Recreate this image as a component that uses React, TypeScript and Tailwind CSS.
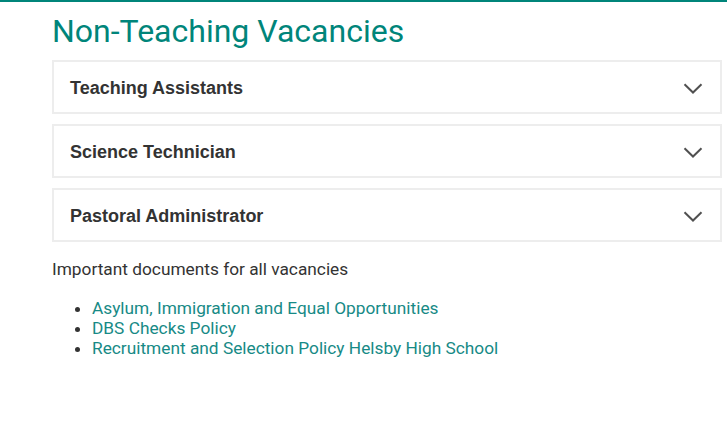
import { useState } from "react";

const vacancies = ["Teaching Assistants", "Science Technician", "Pastoral Administrator"];

const documents = [
  "Asylum, Immigration and Equal Opportunities",
  "DBS Checks Policy",
  "Recruitment and Selection Policy Helsby High School",
];

function Chevron() {
  return (
    <svg width="20" height="11" viewBox="0 0 20 11" fill="none">
      <path d="M1.5 1.2l8.5 8.3 8.5-8.3" stroke="#505050" strokeWidth="2" />
    </svg>
  );
}

function AccordionItem({ title }: { title: string }) {
  const [open, setOpen] = useState(false);
  return (
    <div className="border-2 border-[#ededed] bg-white">
      <button
        className="flex h-[50px] w-full items-center justify-between pl-4 pr-[17px] pt-[2px] text-left"
        onClick={() => setOpen(!open)}
      >
        <span className="font-['Liberation_Sans',Arial,sans-serif] text-[18px] font-bold text-[#333333]">
          {title}
        </span>
        <Chevron />
      </button>
    </div>
  );
}

export default function App() {
  return (
    <div className="min-h-[444px] border-t-2 border-[#00857a] bg-white font-['Roboto',sans-serif]">
      <div className="pl-[52px] pr-[5px]">
        <h1 className="pt-[9px] text-[32px] leading-[40px] text-[#00857a]">Non-Teaching Vacancies</h1>

        <div className="mt-[9px] flex flex-col gap-[10px]">
          {vacancies.map((v) => (
            <AccordionItem key={v} title={v} />
          ))}
        </div>

        <p className="mt-[17px] text-[17.3px] leading-[20px] text-[#333333]">Important documents for all vacancies</p>

        <ul className="mt-[19px] list-disc pl-[40px] text-[17.3px] leading-[20px] text-[#333333]">
          {documents.map((d) => (
            <li key={d}>
              <a href="#" className="text-[#178a86]">
                {d}
              </a>
            </li>
          ))}
        </ul>
      </div>
    </div>
  );
}
